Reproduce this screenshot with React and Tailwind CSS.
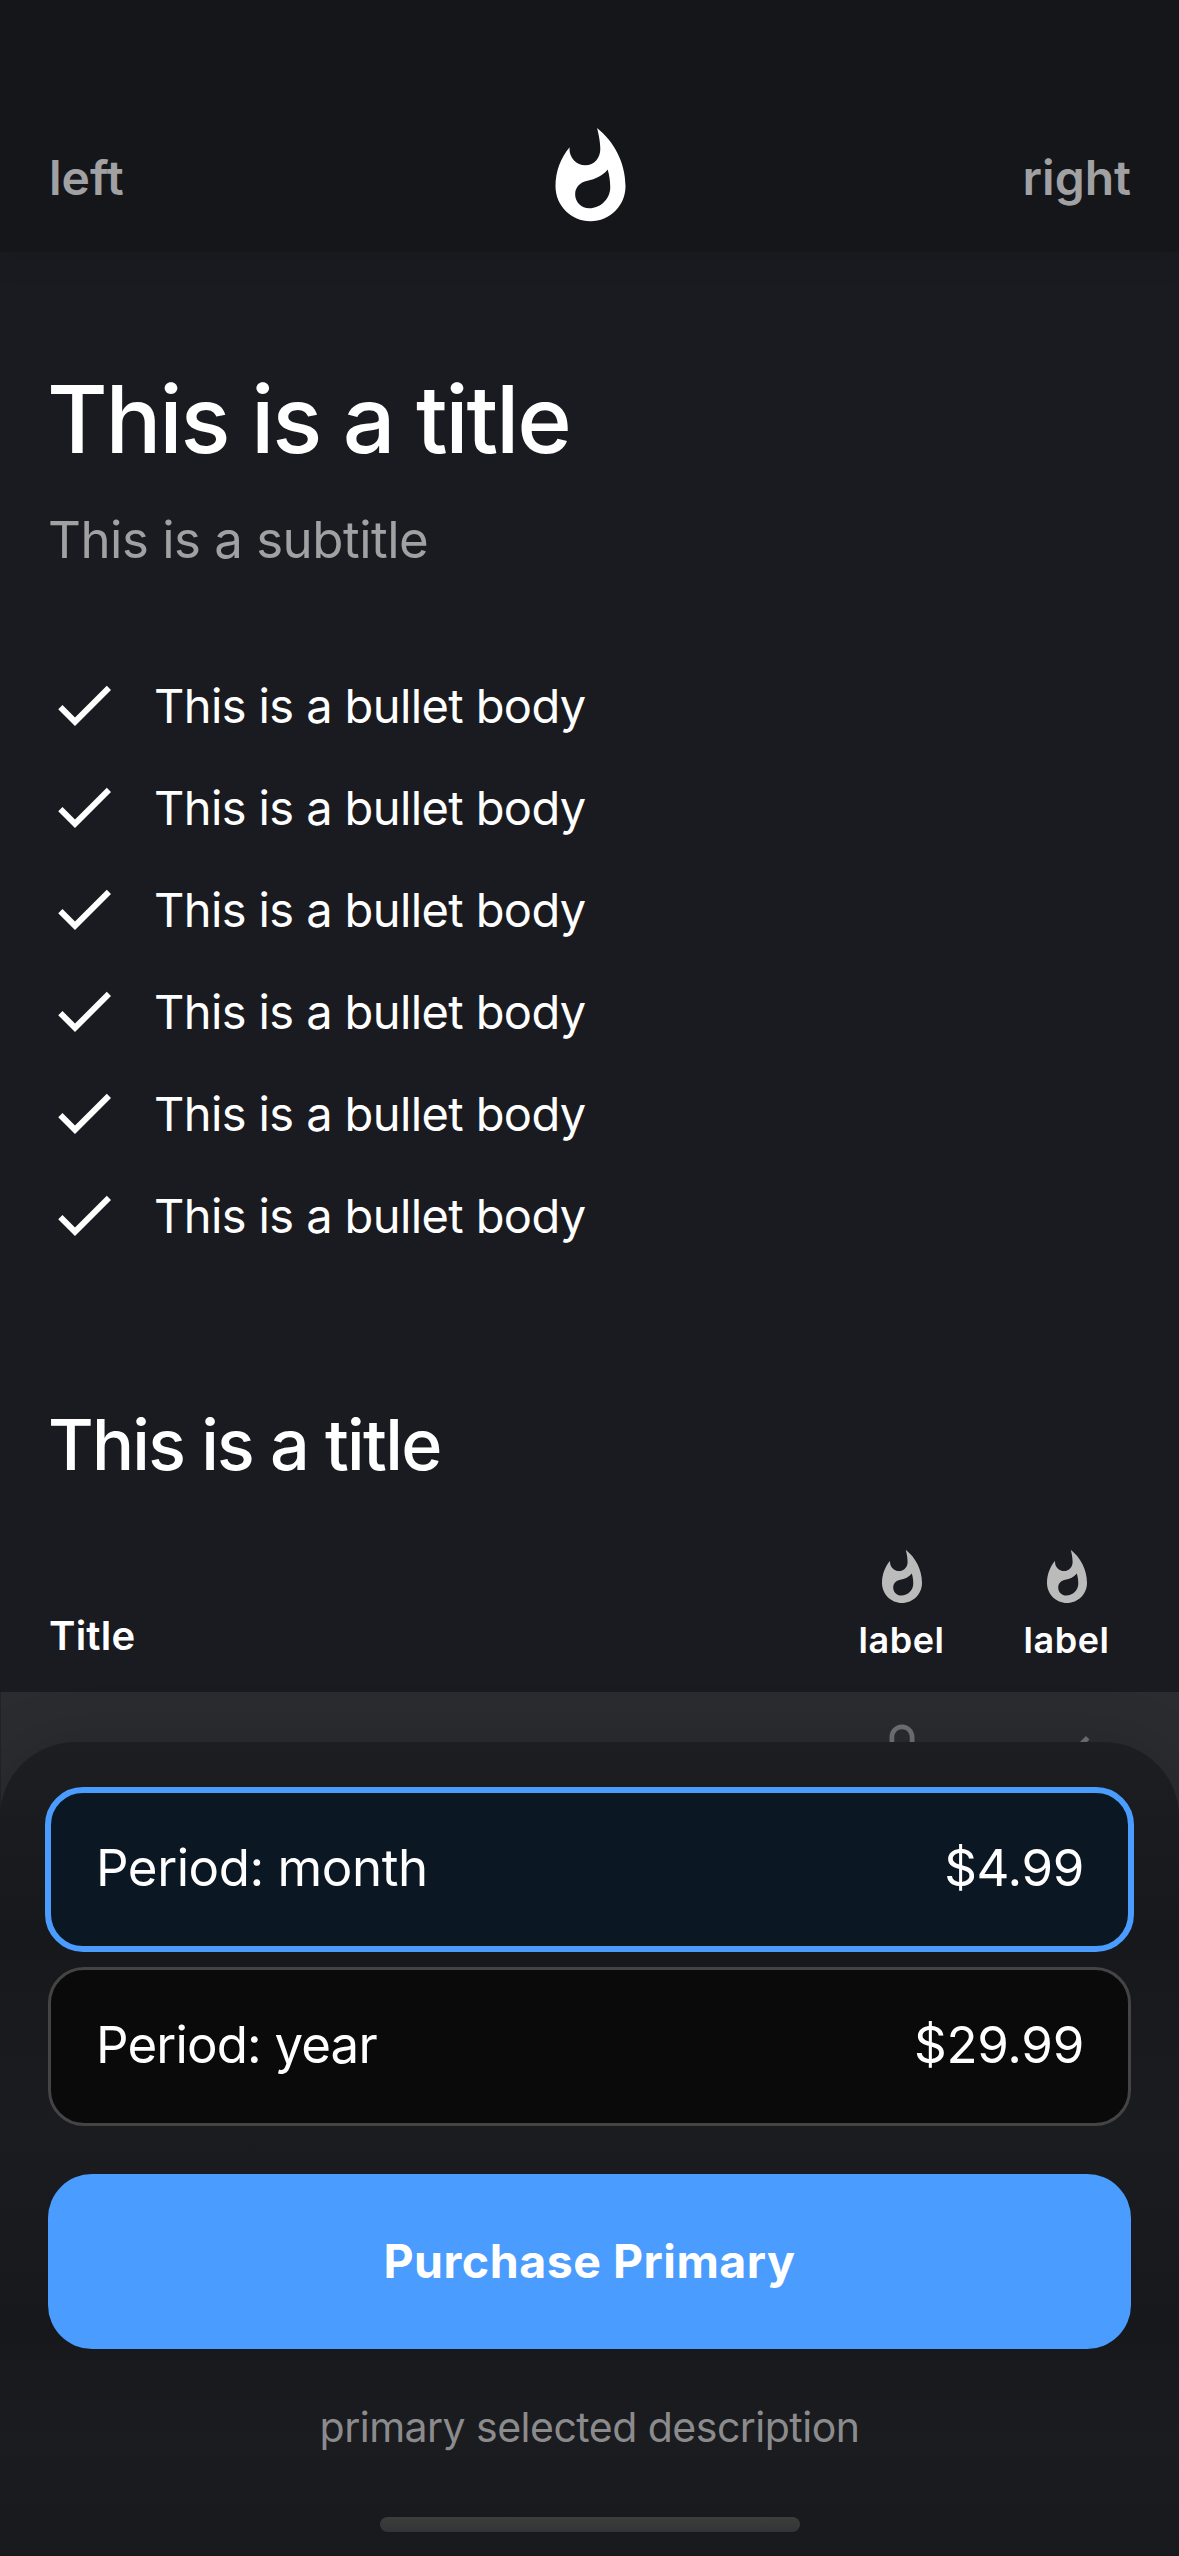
import React from "react";

function Icon({ d, className }) {
  return (
    <svg viewBox="0 0 24 24" fill="currentColor" className={className} aria-hidden="true">
      <path d={d} />
    </svg>
  );
}

const FLAME =
  "M13.5.67s.74 2.65.74 4.8c0 2.06-1.35 3.73-3.41 3.73-2.07 0-3.63-1.67-3.63-3.73l.03-.36C5.21 7.51 4 10.62 4 14c0 4.42 3.58 8 8 8s8-3.58 8-8C20 8.61 17.41 3.8 13.5.67zM11.71 19c-1.78 0-3.22-1.4-3.22-3.14 0-1.62 1.05-2.76 2.81-3.12 1.77-.36 3.6-1.21 4.62-2.58.39 1.29.59 2.65.59 4.04 0 2.65-2.15 4.8-4.8 4.8z";
const CHECK = "M9 16.17L4.83 12l-1.42 1.41L9 19 21 7l-1.41-1.41z";
const LOCK =
  "M12 17c1.1 0 2-.9 2-2s-.9-2-2-2-2 .9-2 2 .9 2 2 2zm6-9h-1V6c0-2.76-2.24-5-5-5S7 3.24 7 6v2H6c-1.1 0-2 .9-2 2v10c0 1.1.9 2 2 2h12c1.1 0 2-.9 2-2V10c0-1.1-.9-2-2-2zM8.9 6c0-1.71 1.39-3.1 3.1-3.1s3.1 1.39 3.1 3.1v2H8.9V6zM18 20H6V10h12v10z";

const bullets = Array(6).fill("This is a bullet body");
const columns = ["label", "label"];

function Header() {
  return (
    <header className="flex h-[252px] shrink-0 items-center bg-[#15161a] px-12 pt-[103px] text-5xl font-semibold text-[#a1a1a3] shadow-[0_0_36px_rgba(0,0,0,0.12)]">
      <span className="flex-1 pl-px">left</span>
      <Icon d={FLAME} className="size-[105px] text-white" />
      <span className="flex-1 text-right">right</span>
    </header>
  );
}

function Table() {
  return (
    <section>
      <div className="flex h-[205px] items-end pr-[30px] pl-12">
        <h3 className="flex-1 pb-[32px] pl-px text-[40px] leading-[49px] font-semibold tracking-[0.24px]">Title</h3>
        {columns.map((label, i) => (
          <div key={i} className="flex w-[165px] flex-col items-center pb-[30px]">
            <Icon d={FLAME} className="size-[60px] text-[#bbbbbb]" />
            <span className="mt-[11px] text-4xl leading-[43px] font-semibold tracking-[0.54px]">{label}</span>
          </div>
        ))}
      </div>
      <div className="flex h-[132px] justify-end border-l border-[#222327] bg-[#2b2c30] pt-[30px] pr-[30px] text-[#717173]">
        <div className="flex w-[165px] justify-center">
          <Icon d={LOCK} className="size-[60px]" />
        </div>
        <div className="flex w-[165px] justify-center">
          <Icon d={CHECK} className="size-[60px]" />
        </div>
      </div>
    </section>
  );
}

function Sheet() {
  return (
    <section className="absolute inset-x-0 bottom-0 flex h-[814px] flex-col rounded-t-[75px] bg-[linear-gradient(to_bottom,#1d1e21_0%,#17181b_24%,#1b1c1f_48%,#17181b_72%,#1b1c1f_86%,#18191c_100%)] px-12 pt-12 shadow-[0_0_60px_rgba(0,0,0,0.15)]">
      <div className="flex flex-col gap-[18px] text-[51px] leading-[61px]">
        <div className="-m-[3px] flex h-[165px] items-center justify-between rounded-[38px] border-[6px] border-[#4a9cff] bg-[#0b1824] px-11 pb-1">
          <span className="pl-px tracking-[-0.45px]">Period: month</span>
          <span className="tracking-[-0.35px]">$4.99</span>
        </div>
        <div className="flex h-[159px] items-center justify-between rounded-[36px] border-[3px] border-[#444444] bg-[#0a0a0a] px-11 pb-1">
          <span className="pl-px tracking-[-0.85px]">Period: year</span>
          <span className="tracking-[-0.3px]">$29.99</span>
        </div>
      </div>
      <button className="mt-12 h-[175px] shrink-0 rounded-[44px] bg-[#4a9cff] text-[46.5px] font-bold tracking-[0.5px] text-white">
        Purchase Primary
      </button>
      <p className="mt-[53px] text-center text-[41px] leading-[50px] tracking-[-0.52px] text-[#8b8b8d]">
        primary selected description
      </p>
      <div className="mt-[65px] h-[15px] w-[420px] self-center rounded-full bg-linear-to-b from-[#3d3d3e] to-[#333435]" />
    </section>
  );
}

export default function App() {
  return (
    <div className="relative flex h-[2556px] w-[1179px] flex-col overflow-hidden bg-[#1a1b20] font-[Inter,sans-serif] text-white">
      <Header />
      <main>
        <div className="px-12 pt-[111px]">
          <h1 className="-ml-px text-[93px] leading-[112px] font-medium tracking-[-2.2px]">This is a title</h1>
          <p className="mt-[35px] text-[51px] leading-[60px] tracking-[-0.51px] text-[#a1a1a3]">This is a subtitle</p>
          <ul className="mt-[84px]">
            {bullets.map((text, i) => (
              <li key={i} className="flex h-[102px] items-center gap-[34px]">
                <Icon d={CHECK} className="size-[72px]" />
                <span className="text-[47px] leading-[57px] tracking-[-0.6px]">{text}</span>
              </li>
            ))}
          </ul>
          <h2 className="mt-[136px] text-[70px] leading-[85px] font-medium tracking-[-1.72px]">This is a title</h2>
        </div>
        <Table />
      </main>
      <Sheet />
    </div>
  );
}
